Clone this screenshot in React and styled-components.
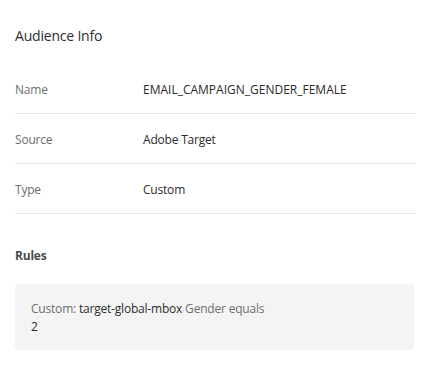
import styled, { createGlobalStyle } from "styled-components";

const GlobalStyle = createGlobalStyle`
  body {
    margin: 0;
    background: #ffffff;
    font-family: "Open Sans", "Noto Sans", sans-serif;
    letter-spacing: -0.2px;
  }
`;

const Panel = styled.div`
  display: flex;
  flex-direction: column;
  padding: 0 11px 0 15px;
  width: 427px;
  box-sizing: border-box;
`;

const Title = styled.h2`
  margin: 0;
  padding: 27px 0 19px;
  line-height: 18px;
  font-size: 14px;
  font-weight: 400;
  color: #2c2c2c;
`;

const Row = styled.div`
  display: grid;
  grid-template-columns: 128px 1fr;
  align-items: center;
  height: 50px;
  padding-top: 2px;
  border-bottom: 1px solid #eaeaea;
  box-sizing: border-box;
  font-size: 12px;
`;

const Label = styled.span`
  color: #6e6e6e;
`;

const Value = styled.span`
  color: #2c2c2c;
  letter-spacing: ${(p) => (p.$caps ? "0" : "-0.2px")};
`;

const SectionTitle = styled.h3`
  margin: 0;
  padding: 33px 0 19px;
  line-height: 18px;
  font-size: 12px;
  font-weight: 700;
  color: #4b4b4b;
`;

const RuleBox = styled.div`
  background: #f4f4f4;
  border-radius: 4px;
  padding: 16px 16px 14px;
  font-size: 12px;
  line-height: 18px;
  margin-right: 2px;
`;

const Muted = styled.span`
  color: #6e6e6e;
`;

const Strong = styled.span`
  color: #2c2c2c;
`;

const rows = [
  ["Name", "EMAIL_CAMPAIGN_GENDER_FEMALE", true],
  ["Source", "Adobe Target"],
  ["Type", "Custom"],
];

export default function App() {
  return (
    <>
      <GlobalStyle />
      <Panel>
        <Title>Audience Info</Title>
        {rows.map(([label, value, caps]) => (
          <Row key={label}>
            <Label>{label}</Label>
            <Value $caps={caps}>{value}</Value>
          </Row>
        ))}
        <SectionTitle>Rules</SectionTitle>
        <RuleBox>
          <Muted>Custom: </Muted>
          <Strong>target-global-mbox</Strong>
          <Muted> Gender equals</Muted>
          <br />
          <Strong>2</Strong>
        </RuleBox>
      </Panel>
    </>
  );
}
